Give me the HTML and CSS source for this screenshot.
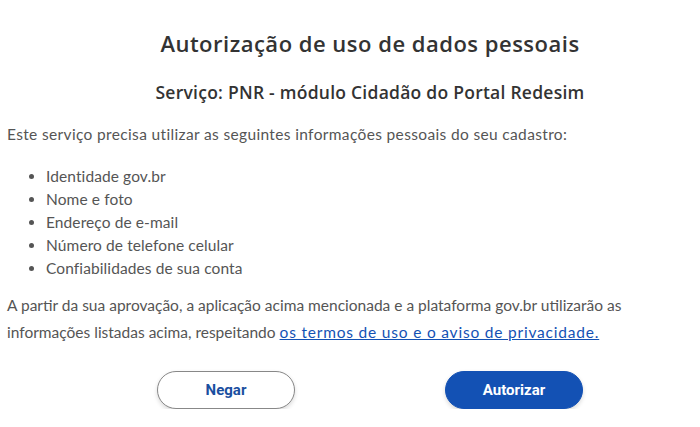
FILE: index.html
```html
<!DOCTYPE html>
<html lang="pt-BR">
<head>
<meta charset="utf-8">
<title>Autorização de uso de dados pessoais</title>
<link rel="stylesheet" href="styles.css">
</head>
<body>
<main class="page">
  <header class="head">
    <h1 class="title">Autorização de uso de dados pessoais</h1>
    <h2 class="service">Serviço: PNR - módulo Cidadão do Portal Redesim</h2>
  </header>
  <p class="intro">Este serviço precisa utilizar as seguintes informações pessoais do seu cadastro:</p>
  <ul class="items">
    <li>Identidade gov.br</li>
    <li>Nome e foto</li>
    <li>Endereço de e-mail</li>
    <li>Número de telefone celular</li>
    <li>Confiabilidades de sua conta</li>
  </ul>
  <p class="terms">A partir da sua aprovação, a aplicação acima mencionada e a plataforma gov.br utilizarão as informações listadas acima, respeitando <a href="#" class="link">os termos de uso e o aviso de privacidade.</a></p>
  <div class="actions">
    <button class="btn btn-secondary" type="button">Negar</button>
    <button class="btn btn-primary" type="button">Autorizar</button>
  </div>
</main>
</body>
</html>
```

FILE: styles.css
```css
* { box-sizing: border-box; }
html, body { margin: 0; padding: 0; background: #fff; }
body {
  font-family: "Lato", "Open Sans", sans-serif;
  color: #555;
}
.page {
  width: 700px;
  padding: 0 7px;
}
.head {
  padding-left: 40px;
  text-align: center;
  font-family: "Open Sans", "Lato", sans-serif;
}
.title {
  margin: 0;
  padding-top: 29px;
  font-size: 22px;
  line-height: 28px;
  font-weight: 600;
  letter-spacing: 0.5px;
  color: #333;
}
.service {
  margin: 0;
  padding-top: 23px;
  font-size: 17.5px;
  line-height: 24px;
  font-weight: 600;
  letter-spacing: 0.25px;
  color: #333;
}
.intro {
  margin: 18px 0 0;
  font-size: 15.5px;
  line-height: 24px;
  letter-spacing: 0.35px;
}
.items {
  margin: 19px 0 0;
  padding-left: 39px;
  font-size: 15.5px;
  line-height: 23px;
  letter-spacing: 0.1px;
}
.terms {
  margin: 12px 0 0;
  font-size: 15.5px;
  line-height: 27px;
}
.link {
  color: #1351b4;
  text-decoration: underline;
  letter-spacing: 0.8px;
}
.actions {
  display: flex;
  justify-content: center;
  gap: 150px;
  padding-left: 40px;
  margin-top: 25px;
}
.btn {
  width: 138px;
  height: 38px;
  border-radius: 19px;
  font-family: "Roboto", "Liberation Sans", sans-serif;
  font-weight: 700;
  font-size: 15px;
  cursor: pointer;
  box-shadow: 0 2px 4px rgba(0,0,0,0.15);
}
.btn-secondary {
  background: #fff;
  color: #1a4f9f;
  border: 1px solid #888;
}
.btn-primary {
  background: #1351b4;
  color: #fff;
  border: 1px solid #1351b4;
}
```
